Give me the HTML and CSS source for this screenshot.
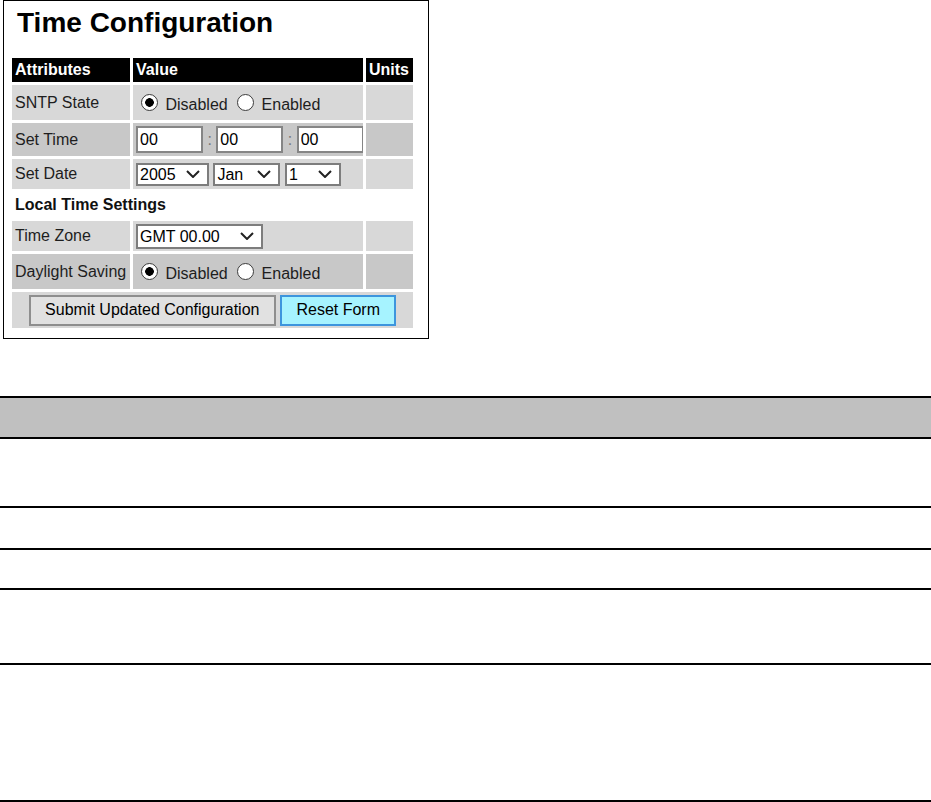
FILE: index.html
```html
<!DOCTYPE html>
<html lang="en">
<head>
<meta charset="utf-8">
<title>Time Configuration</title>
<link rel="stylesheet" href="styles.css">
</head>
<body>
<div class="panel">
  <h1 class="title">Time Configuration</h1>
  <table class="cfg">
    <colgroup><col class="c-attr"><col class="c-val"><col class="c-unit"></colgroup>
    <tr class="hdr"><th>Attributes</th><th>Value</th><th>Units</th></tr>
    <tr class="light h35"><td>SNTP State</td><td><input class="radio" type="radio" name="sntp" checked> Disabled <input class="radio" type="radio" name="sntp"> Enabled</td><td></td></tr>
    <tr class="dark h33"><td>Set Time</td><td><input class="txt" type="text" value="00"><span class="colon"> : </span><input class="txt" type="text" value="00"><span class="colon"> : </span><input class="txt" type="text" value="00"></td><td></td></tr>
    <tr class="light h30"><td>Set Date</td><td><span class="sel w-year"><select><option>2005</option></select><svg class="chev" width="14" height="8" viewBox="0 0 14 8"><polyline points="1,1 7,7 13,1" fill="none" stroke="#222" stroke-width="2"/></svg></span> <span class="sel w-mon"><select><option>Jan</option></select><svg class="chev" width="14" height="8" viewBox="0 0 14 8"><polyline points="1,1 7,7 13,1" fill="none" stroke="#222" stroke-width="2"/></svg></span> <span class="sel w-day"><select><option>1</option></select><svg class="chev" width="14" height="8" viewBox="0 0 14 8"><polyline points="1,1 7,7 13,1" fill="none" stroke="#222" stroke-width="2"/></svg></span></td><td></td></tr>
    <tr class="sect h26"><td colspan="3">Local Time Settings</td></tr>
    <tr class="light h30"><td>Time Zone</td><td><span class="sel w-tz tall"><select><option>GMT 00.00</option></select><svg class="chev" width="14" height="8" viewBox="0 0 14 8"><polyline points="1,1 7,7 13,1" fill="none" stroke="#222" stroke-width="2"/></svg></span></td><td></td></tr>
    <tr class="dark h35"><td>Daylight Saving</td><td><input class="radio" type="radio" name="dst" checked> Disabled <input class="radio" type="radio" name="dst"> Enabled</td><td></td></tr>
    <tr class="light h36"><td colspan="3" class="actions"><button class="btn btn-submit" type="button">Submit Updated Configuration</button> <button class="btn btn-reset" type="button">Reset Form</button></td></tr>
  </table>
</div>

<div class="doc">
  <div class="doc-head"></div>
  <div class="doc-row r1"></div>
  <div class="doc-row r2"></div>
  <div class="doc-row r3"></div>
  <div class="doc-row r4"></div>
  <div class="doc-row r5"></div>
</div>
</body>
</html>
```

FILE: styles.css
```css
html, body {
  margin: 0;
  padding: 0;
  background: #fff;
}

body {
  font-family: "Liberation Sans", Arial, sans-serif;
  font-size: 16px;
  color: #1e1e1e;
}

.panel {
  box-sizing: border-box;
  margin-left: 3px;
  width: 426px;
  height: 339px;
  border: 1px solid #000;
}

.title {
  margin: 6px 0 0 0;
  padding-left: 13px;
  font-size: 28px;
  line-height: 32px;
  font-weight: bold;
  color: #000;
}

.cfg {
  margin: 16px 0 0 5px;
  border-collapse: separate;
  border-spacing: 3px;
  table-layout: fixed;
  width: 407px;
}

.c-attr { width: 118px; }
.c-val { width: 230px; }
.c-unit { width: 47px; }

.cfg th,
.cfg td {
  box-sizing: border-box;
  padding: 0 0 0 3px;
  vertical-align: middle;
  text-align: left;
  white-space: nowrap;
  overflow: hidden;
}

.hdr th {
  height: 24px;
  background: #000;
  color: #fff;
  font-weight: bold;
}

.light td { background: #d8d8d8; }
.dark td { background: #c8c8c8; }
.sect td {
  background: #fff;
  font-weight: bold;
  color: #111;
}

.h35 td { height: 35px; }
.h33 td { height: 33px; }
.h30 td { height: 30px; }
.h26 td { height: 26px; }
.h36 td { height: 36px; }

.radio {
  -webkit-appearance: none;
  appearance: none;
  box-sizing: border-box;
  width: 17px;
  height: 17px;
  margin: 3px 3px 0 5px;
  border: 1px solid #3c3c3c;
  border-radius: 50%;
  background: #fff;
  vertical-align: -1px;
  position: relative;
}

.radio:checked {
  background: radial-gradient(circle, #000 0 4px, #fff 4.6px);
}

.txt {
  box-sizing: border-box;
  width: 67px;
  height: 27px;
  margin: 0;
  padding: 0 2px;
  border: 2px solid #858585;
  background: #fff;
  font-family: "Liberation Sans", Arial, sans-serif;
  font-size: 16px;
  color: #000;
  vertical-align: middle;
}

.colon {
  color: #777;
  vertical-align: middle;
}

.sel {
  position: relative;
  display: inline-block;
  vertical-align: middle;
  height: 23px;
}

.sel.tall { height: 25px; }

.sel select {
  -webkit-appearance: none;
  appearance: none;
  box-sizing: border-box;
  width: 100%;
  height: 100%;
  margin: 0;
  padding: 0 0 0 2px;
  border: 2px solid #7d7d7d;
  border-radius: 0;
  background: #fff;
  font-family: "Liberation Sans", Arial, sans-serif;
  font-size: 16px;
  color: #000;
}

.w-year { width: 73px; }
.w-mon { width: 67px; }
.w-day { width: 56px; }
.w-tz { width: 127px; }

.chev {
  position: absolute;
  right: 9px;
  top: 50%;
  margin-top: -4px;
  pointer-events: none;
}

.actions {
  text-align: center;
}

.cfg td.actions {
  padding: 0;
  text-align: center;
}

.btn {
  box-sizing: border-box;
  height: 31px;
  margin: 0;
  padding: 0;
  font-family: "Liberation Sans", Arial, sans-serif;
  font-size: 16px;
  color: #000;
  vertical-align: middle;
  cursor: pointer;
}

.btn-submit {
  width: 247px;
  background: #e1e1e1;
  border: 2px solid #8e8e8e;
}

.btn-reset {
  width: 116px;
  background: #a6f3ff;
  border: 2px solid #3d95dd;
}

.doc {
  margin-top: 57px;
  width: 931px;
}

.doc-head {
  height: 39px;
  background: #c0c0c0;
  border-top: 2px solid #000;
  border-bottom: 2px solid #000;
}

.doc-row {
  border-bottom: 2px solid #000;
}

.r1 { height: 67px; }
.r2 { height: 40px; }
.r3 { height: 38px; }
.r4 { height: 73px; }
.r5 { height: 135px; }
```
